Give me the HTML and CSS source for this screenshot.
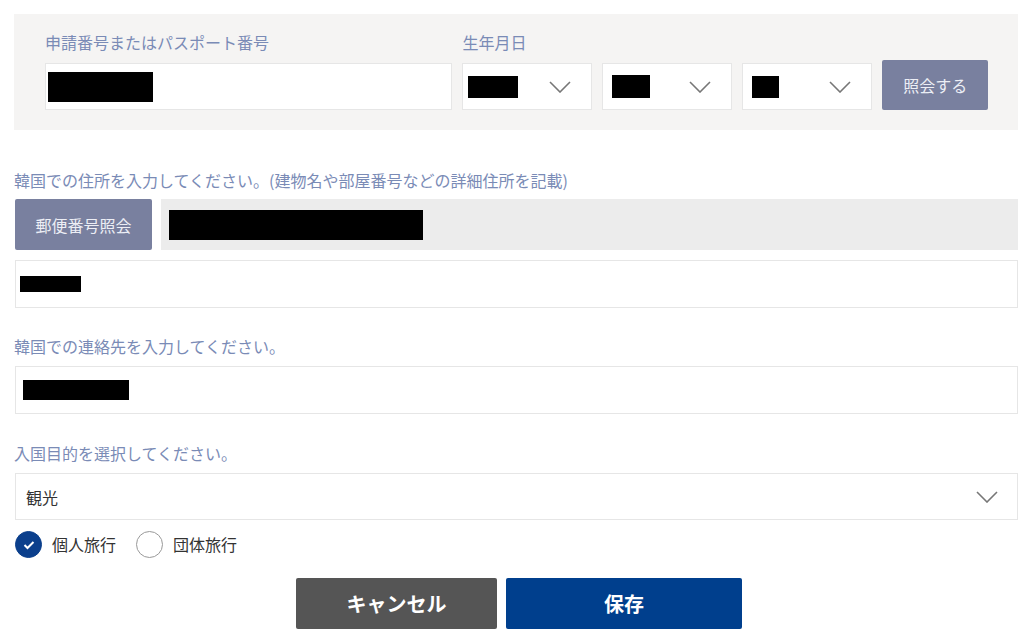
FILE: index.html
```html
<!DOCTYPE html>
<html lang="ja">
<head>
    <meta charset="UTF-8">
    <meta name="viewport" content="width=device-width, initial-scale=1.0">
    <title>入国情報</title>
    <link rel="stylesheet" href="styles.css">
</head>
<body>

<div class="page">
    <div class="lookup">
        <div class="field passport">
            <label class="label">申請番号またはパスポート番号</label>
            <div class="input"><span class="mask mask-passport"></span></div>
        </div>
        <div class="field">
            <label class="label">生年月日</label>
            <div class="dates">
                <div class="select small"><span class="mask mask-year"></span><svg class="chevron" viewBox="0 0 22 12"><polyline points="1,1 11,11 21,1"/></svg></div>
                <div class="select small"><span class="mask mask-month"></span><svg class="chevron" viewBox="0 0 22 12"><polyline points="1,1 11,11 21,1"/></svg></div>
                <div class="select small"><span class="mask mask-day"></span><svg class="chevron" viewBox="0 0 22 12"><polyline points="1,1 11,11 21,1"/></svg></div>
            </div>
        </div>
        <button class="btn-sub lookup-btn">照会する</button>
    </div>

    <div class="section address">
        <label class="label">韓国での住所を入力してください。(建物名や部屋番号などの詳細住所を記載)</label>
        <div class="zip-row">
            <button class="btn-sub zip-btn">郵便番号照会</button>
            <div class="readonly"><span class="mask mask-addr"></span></div>
        </div>
        <div class="input wide"><span class="mask mask-addr2"></span></div>
    </div>

    <div class="section contact">
        <label class="label">韓国での連絡先を入力してください。</label>
        <div class="input wide"><span class="mask mask-phone"></span></div>
    </div>

    <div class="section purpose">
        <label class="label">入国目的を選択してください。</label>
        <div class="select wide">
            <span class="value">観光</span>
            <svg class="chevron" viewBox="0 0 22 12"><polyline points="1,1 11,11 21,1"/></svg>
        </div>
        <div class="radios">
            <label class="radio checked">
                <span class="dot"><svg viewBox="0 0 12 10"><polyline points="1.5,5 4.5,8 10.5,2"/></svg></span>
                個人旅行
            </label>
            <label class="radio">
                <span class="dot"></span>
                団体旅行
            </label>
        </div>
    </div>

    <div class="actions">
        <button class="btn cancel">キャンセル</button>
        <button class="btn save">保存</button>
    </div>
</div>

</body>
</html>
```

FILE: styles.css
```css
* {
    margin: 0;
    padding: 0;
    box-sizing: border-box;
}

body {
    font-family: "Noto Sans CJK JP", "Noto Sans", sans-serif;
    font-size: 16px;
    color: #333;
    background-color: #fff;
}

.page {
    padding: 14px 6px 0 14px;
}

.label {
    display: block;
    font-size: 16px;
    line-height: 20px;
    color: #7a8bb6;
}

.lookup {
    display: flex;
    align-items: flex-end;
    gap: 10px;
    background-color: #f5f4f3;
    padding: 18px 30px 20px 31px;
}

.lookup .label {
    margin-bottom: 11px;
}

.passport {
    width: 409px;
}

.dates {
    display: flex;
    gap: 10px;
}

.input,
.select {
    display: flex;
    align-items: center;
    height: 47px;
    background-color: #fff;
    border: 1px solid #e6e6e6;
}

.input.wide,
.select.wide {
    margin-left: 1px;
}

.select {
    justify-content: space-between;
}

.select.small {
    width: 130px;
    padding: 0 20px 0 5px;
}

.chevron {
    width: 22px;
    height: 12px;
    fill: none;
    stroke: #777;
    stroke-width: 1.6;
}

.mask {
    display: inline-block;
    background-color: #000;
}

.mask-passport { width: 105px; height: 30px; margin-left: 2px; }
.mask-year { width: 50px; height: 22px; }
.mask-month { width: 38px; height: 23px; margin-left: 4px; }
.mask-day { width: 27px; height: 22px; margin-left: 4px; }
.mask-addr { width: 254px; height: 30px; margin-left: 8px; }
.mask-addr2 { width: 61px; height: 16px; margin-left: 4px; }
.mask-phone { width: 106px; height: 20px; margin-left: 7px; }

.btn-sub {
    font-family: inherit;
    font-size: 16px;
    color: #eceef5;
    background-color: #79809f;
    border: none;
    border-radius: 2px;
}

.lookup-btn {
    width: 106px;
    height: 50px;
}

.section {
    margin-top: 40px;
}

.section.contact {
    margin-top: 28px;
}

.section.purpose {
    margin-top: 29px;
}

.section .label {
    margin-bottom: 9px;
}

.section.contact .label,
.section.purpose .label {
    margin-bottom: 10px;
}

.zip-row {
    display: flex;
    gap: 9px;
    margin-left: 1px;
    margin-bottom: 10px;
}

.zip-btn {
    width: 137px;
    height: 51px;
}

.readonly {
    flex: 1;
    display: flex;
    align-items: center;
    background-color: #ececec;
}

.input.wide {
    height: 48px;
}

.select.wide {
    padding: 0 19px 0 10px;
}

.value {
    font-size: 16px;
    color: #333;
}

.radios {
    display: flex;
    gap: 20px;
    margin-top: 11px;
    margin-left: 1px;
}

.radio {
    display: flex;
    align-items: center;
    gap: 10px;
    font-size: 16px;
    line-height: 27px;
    color: #333;
}

.dot {
    display: flex;
    align-items: center;
    justify-content: center;
    width: 27px;
    height: 27px;
    border-radius: 50%;
    border: 1px solid #999;
    background-color: #fff;
}

.radio.checked .dot {
    border-color: #0b3f8c;
    background-color: #0b3f8c;
}

.dot svg {
    width: 12px;
    height: 10px;
    fill: none;
    stroke: #fff;
    stroke-width: 2;
}

.actions {
    display: flex;
    justify-content: center;
    gap: 9px;
    margin-top: 20px;
    padding-left: 6px;
}

.btn {
    height: 51px;
    font-family: inherit;
    font-size: 20px;
    font-weight: bold;
    color: #fff;
    border: none;
    border-radius: 2px;
}

.cancel {
    width: 201px;
    background-color: #555;
}

.save {
    width: 236px;
    background-color: #003f8d;
}
```
